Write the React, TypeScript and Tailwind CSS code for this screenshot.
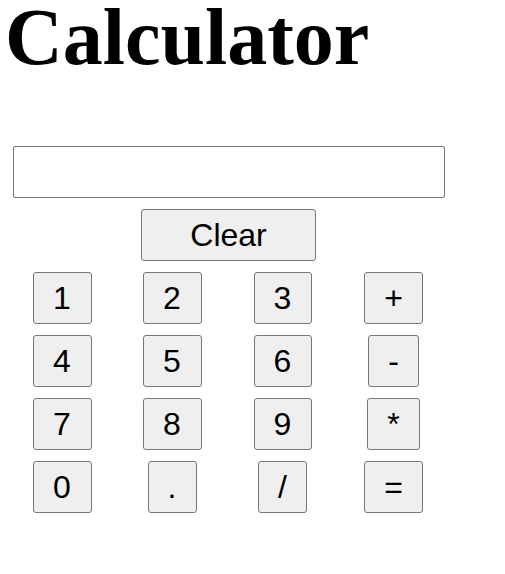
import React from "react";

const keys: { label: string; w: string }[] = [
  { label: "1", w: "w-[59px]" },
  { label: "2", w: "w-[59px]" },
  { label: "3", w: "w-[58px]" },
  { label: "+", w: "w-[59px]" },
  { label: "4", w: "w-[59px]" },
  { label: "5", w: "w-[59px]" },
  { label: "6", w: "w-[58px]" },
  { label: "-", w: "w-[51px]" },
  { label: "7", w: "w-[59px]" },
  { label: "8", w: "w-[59px]" },
  { label: "9", w: "w-[58px]" },
  { label: "*", w: "w-[53px]" },
  { label: "0", w: "w-[59px]" },
  { label: ".", w: "w-[49px]" },
  { label: "/", w: "w-[49px]" },
  { label: "=", w: "w-[59px]" },
];

export default function App() {
  return (
    <div className="w-[505px] h-[574px] bg-white text-black overflow-hidden">
      <h1
        className="ml-[5px] text-[80px] leading-[74px] font-bold"
        style={{ fontFamily: '"Liberation Serif", "Times New Roman", serif' }}
      >
        Calculator
      </h1>
      <input
        type="text"
        className="block mt-[72px] ml-[13px] w-[432px] h-[52px] border border-[#767676] rounded-[2px] bg-white"
      />
      <div style={{ fontFamily: '"Liberation Sans", Arial, sans-serif' }}>
        <button className="flex items-center justify-center mt-[11px] ml-[141px] w-[175px] h-[52px] bg-[#efefef] border border-[#767676] rounded-[3px] text-[32px] leading-none">
          Clear
        </button>
        <div className="grid grid-cols-[110px_110px_111px_111px] gap-y-[11px] mt-[11px] ml-[7px] justify-items-center">
          {keys.map((k) => (
            <button
              key={k.label}
              className={`${k.w} h-[52px] flex items-center justify-center bg-[#efefef] border border-[#767676] rounded-[3px] text-[32px] leading-none`}
            >
              {k.label}
            </button>
          ))}
        </div>
      </div>
    </div>
  );
}
